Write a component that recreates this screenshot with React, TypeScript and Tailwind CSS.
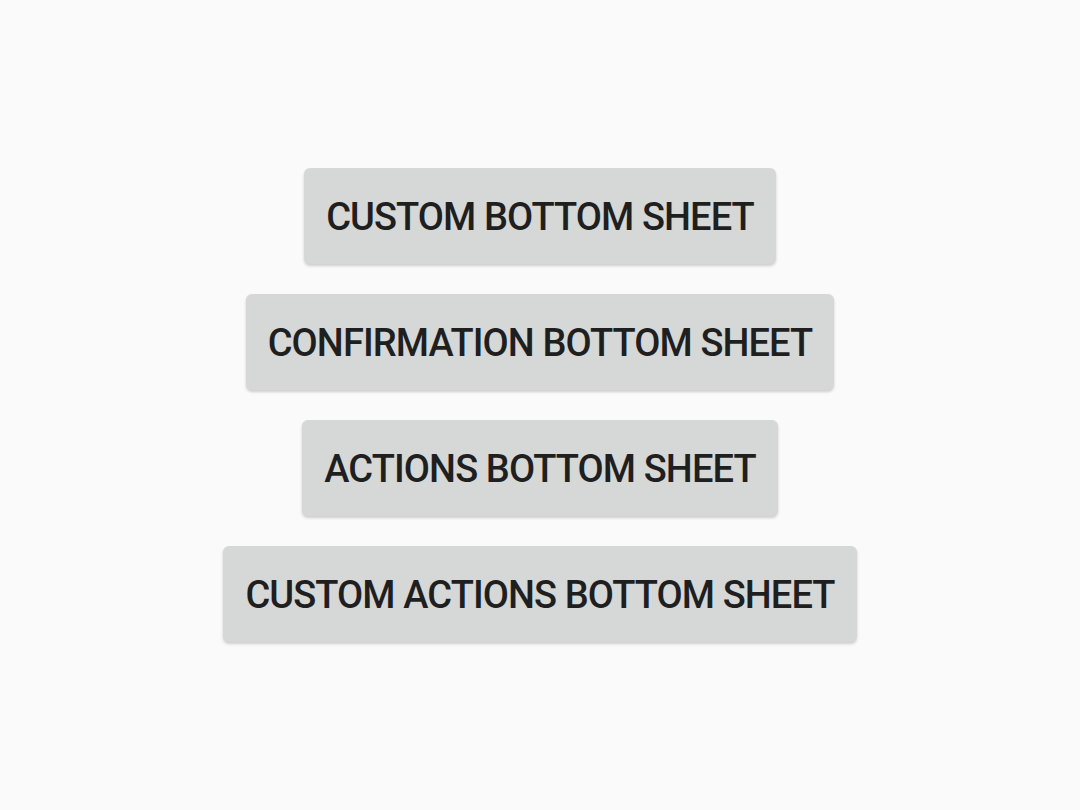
const labels = [
  "Custom bottom sheet",
  "Confirmation bottom sheet",
  "Actions bottom sheet",
  "Custom actions bottom sheet",
];

export default function App() {
  return (
    <div className="flex h-[810px] w-[1080px] flex-col items-center justify-center gap-[30px] bg-[#fafafa] font-['Roboto',sans-serif]">
      {labels.map((label) => (
        <button
          key={label}
          className="flex h-[96px] items-center rounded-[6px] bg-[#d6d7d7] px-[22px] pt-[2px] text-[38px] font-medium uppercase tracking-[-0.9px] text-[#1f1f1f] shadow-[0_2px_3px_rgba(0,0,0,0.18)]"
        >
          {label}
        </button>
      ))}
    </div>
  );
}
